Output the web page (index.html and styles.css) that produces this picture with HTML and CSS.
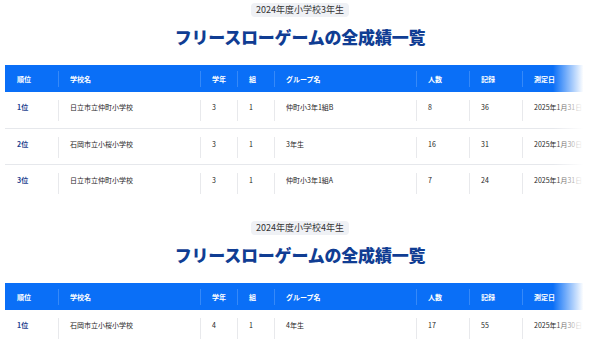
FILE: index.html
```html
<!DOCTYPE html>
<html lang="ja">
<head>
<meta charset="utf-8">
<link rel="stylesheet" href="styles.css">
</head>
<body>
<main class="page">
  <section class="block">
    <div class="badge">2024年度小学校3年生</div>
    <h2 class="title">フリースローゲームの全成績一覧</h2>
    <div class="table-wrap">
      <table class="results">
        <colgroup>
          <col class="c-rank"><col class="c-school"><col class="c-grade"><col class="c-class"><col class="c-group"><col class="c-num"><col class="c-rec"><col class="c-date">
        </colgroup>
        <thead>
          <tr>
            <th><div class="cell first">順位</div></th>
            <th><div class="cell">学校名</div></th>
            <th><div class="cell">学年</div></th>
            <th><div class="cell">組</div></th>
            <th><div class="cell">グループ名</div></th>
            <th><div class="cell">人数</div></th>
            <th><div class="cell">記録</div></th>
            <th><div class="cell">測定日</div></th>
          </tr>
        </thead>
        <tbody>
          <tr>
            <td><div class="rank">1位</div></td>
            <td><div class="cell">日立市立仲町小学校</div></td>
            <td><div class="cell">3</div></td>
            <td><div class="cell">1</div></td>
            <td><div class="cell">仲町小3年1組B</div></td>
            <td><div class="cell">8</div></td>
            <td><div class="cell">36</div></td>
            <td><div class="cell">2025年1月31日</div></td>
          </tr>
          <tr>
            <td><div class="rank">2位</div></td>
            <td><div class="cell">石岡市立小桜小学校</div></td>
            <td><div class="cell">3</div></td>
            <td><div class="cell">1</div></td>
            <td><div class="cell">3年生</div></td>
            <td><div class="cell">16</div></td>
            <td><div class="cell">31</div></td>
            <td><div class="cell">2025年1月30日</div></td>
          </tr>
          <tr class="last">
            <td><div class="rank">3位</div></td>
            <td><div class="cell">日立市立仲町小学校</div></td>
            <td><div class="cell">3</div></td>
            <td><div class="cell">1</div></td>
            <td><div class="cell">仲町小3年1組A</div></td>
            <td><div class="cell">7</div></td>
            <td><div class="cell">24</div></td>
            <td><div class="cell">2025年1月31日</div></td>
          </tr>
        </tbody>
      </table>
      <div class="fade"></div>
    </div>
  </section>

  <section class="block">
    <div class="badge">2024年度小学校4年生</div>
    <h2 class="title">フリースローゲームの全成績一覧</h2>
    <div class="table-wrap">
      <table class="results">
        <colgroup>
          <col class="c-rank"><col class="c-school"><col class="c-grade"><col class="c-class"><col class="c-group"><col class="c-num"><col class="c-rec"><col class="c-date">
        </colgroup>
        <thead>
          <tr>
            <th><div class="cell first">順位</div></th>
            <th><div class="cell">学校名</div></th>
            <th><div class="cell">学年</div></th>
            <th><div class="cell">組</div></th>
            <th><div class="cell">グループ名</div></th>
            <th><div class="cell">人数</div></th>
            <th><div class="cell">記録</div></th>
            <th><div class="cell">測定日</div></th>
          </tr>
        </thead>
        <tbody>
          <tr class="last">
            <td><div class="rank">1位</div></td>
            <td><div class="cell">石岡市立小桜小学校</div></td>
            <td><div class="cell">4</div></td>
            <td><div class="cell">1</div></td>
            <td><div class="cell">4年生</div></td>
            <td><div class="cell">17</div></td>
            <td><div class="cell">55</div></td>
            <td><div class="cell">2025年1月30日</div></td>
          </tr>
        </tbody>
      </table>
      <div class="fade"></div>
    </div>
  </section>
</main>
</body>
</html>
```
FILE: styles.css
```css
* { box-sizing: border-box; }
html, body {
  margin: 0;
  padding: 0;
  background: #ffffff;
}
body {
  font-family: "Noto Sans CJK JP", "Noto Sans", sans-serif;
  color: #333;
  width: 600px;
  height: 363px;
  overflow: hidden;
}
.page {
  display: flex;
  flex-direction: column;
  gap: 18px;
}
.block {
  display: flex;
  flex-direction: column;
  align-items: center;
  padding-top: 3px;
}
.badge {
  background: #eff1f5;
  border-radius: 4px;
  font-size: 9px;
  line-height: 14px;
  height: 14px;
  padding: 0 5px;
  color: #333;
}
.title {
  margin: 9px 0 0;
  font-size: 17px;
  line-height: 22px;
  font-weight: 900;
  color: #103d93;
  letter-spacing: -0.2px;
}
.table-wrap {
  position: relative;
  align-self: stretch;
  margin: 17px 15px 0 5px;
  overflow: hidden;
}
.results {
  border-collapse: collapse;
  table-layout: fixed;
  width: 630px;
  font-size: 7px;
}
.c-rank { width: 53px; }
.c-school { width: 142px; }
.c-grade { width: 37px; }
.c-class { width: 37px; }
.c-group { width: 142px; }
.c-num { width: 53px; }
.c-rec { width: 53px; }
.c-date { width: 113px; }
.results th, .results td {
  padding: 0;
  text-align: left;
  vertical-align: top;
}
.results thead tr {
  background: #0a6ff7;
  height: 27px;
}
.results th {
  color: #fff;
  font-weight: 700;
  padding: 6px 0 5px;
}
.results th .cell {
  height: 16px;
  line-height: 16px;
  border-left: 1px solid rgba(255, 255, 255, 0.18);
}
.results .cell {
  padding-left: 11px;
  white-space: nowrap;
}
.results .cell.first {
  border-left: none;
  padding-left: 12px;
}
.results tbody tr {
  height: 36px;
  border-bottom: 1px solid #e6e8ec;
}
.results tbody tr.last {
  border-bottom: none;
}
.results td {
  padding: 8px 0 6px;
}
.results td .cell {
  height: 21px;
  padding-top: 2px;
  line-height: 10px;
  border-left: 1px solid #e8e9ec;
  color: #262626;
}
.rank {
  height: 21px;
  padding: 2px 0 0 12px;
  line-height: 10px;
  color: #1c3f8f;
  font-weight: 700;
  white-space: nowrap;
}
.fade {
  position: absolute;
  top: 0;
  right: 0;
  bottom: 0;
  width: 32px;
  background: linear-gradient(to right, rgba(255,255,255,0), #ffffff 95%);
  pointer-events: none;
}
```
